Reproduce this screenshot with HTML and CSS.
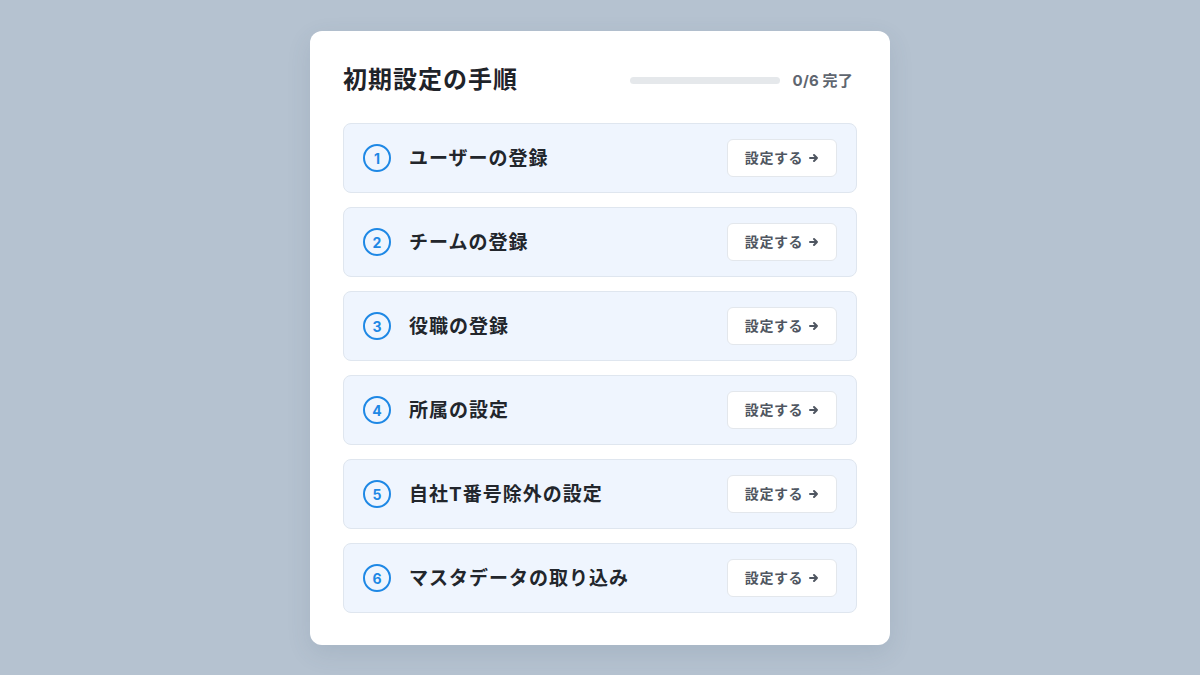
FILE: index.html
```html
<!DOCTYPE html>
<html lang="ja">
<head>
    <meta charset="UTF-8">
    <meta name="viewport" content="width=device-width, initial-scale=1.0">
    <title>初期設定の手順</title>
    <link rel="stylesheet" href="styles.css">
</head>
<body>
    <div class="setup-card">
        <div class="setup-header">
            <h1 class="setup-title">初期設定の手順</h1>
            <div class="progress">
                <div class="progress-bar"><div class="progress-fill" style="width: 0%"></div></div>
                <span class="progress-text">0/6 完了</span>
            </div>
        </div>

        <ul class="steps">
            <li class="step">
                <span class="step-num">1</span>
                <span class="step-label">ユーザーの登録</span>
                <button class="step-btn">設定する <svg class="arrow" viewBox="0 0 10 10"><path d="M1 5h7M5 2l3 3-3 3"/></svg></button>
            </li>
            <li class="step">
                <span class="step-num">2</span>
                <span class="step-label">チームの登録</span>
                <button class="step-btn">設定する <svg class="arrow" viewBox="0 0 10 10"><path d="M1 5h7M5 2l3 3-3 3"/></svg></button>
            </li>
            <li class="step">
                <span class="step-num">3</span>
                <span class="step-label">役職の登録</span>
                <button class="step-btn">設定する <svg class="arrow" viewBox="0 0 10 10"><path d="M1 5h7M5 2l3 3-3 3"/></svg></button>
            </li>
            <li class="step">
                <span class="step-num">4</span>
                <span class="step-label">所属の設定</span>
                <button class="step-btn">設定する <svg class="arrow" viewBox="0 0 10 10"><path d="M1 5h7M5 2l3 3-3 3"/></svg></button>
            </li>
            <li class="step">
                <span class="step-num">5</span>
                <span class="step-label">自社T番号除外の設定</span>
                <button class="step-btn">設定する <svg class="arrow" viewBox="0 0 10 10"><path d="M1 5h7M5 2l3 3-3 3"/></svg></button>
            </li>
            <li class="step">
                <span class="step-num">6</span>
                <span class="step-label">マスタデータの取り込み</span>
                <button class="step-btn">設定する <svg class="arrow" viewBox="0 0 10 10"><path d="M1 5h7M5 2l3 3-3 3"/></svg></button>
            </li>
        </ul>
    </div>
</body>
</html>
```

FILE: styles.css
```css
* {
    box-sizing: border-box;
}

body {
    font-family: Inter, "Noto Sans CJK JP", sans-serif;
    background: #b5c2d0;
    margin: 0;
    min-height: 100vh;
    display: flex;
    justify-content: center;
    padding-top: 31px;
}

.setup-card {
    width: 580px;
    height: 614px;
    background: #ffffff;
    border-radius: 12px;
    padding: 33px;
    box-shadow: 0 8px 24px rgba(60, 80, 110, 0.12);
}

.setup-header {
    display: flex;
    align-items: center;
    justify-content: space-between;
    height: 32px;
    margin-bottom: 27px;
}

.setup-title {
    margin: 0;
    font-size: 24px;
    line-height: 1;
    font-weight: 700;
    color: #1f2329;
    letter-spacing: 1px;
}

.progress {
    display: flex;
    align-items: center;
    gap: 13px;
    margin-right: 4px;
}

.progress-bar {
    width: 150px;
    height: 7px;
    border-radius: 4px;
    background: #e5e8eb;
    overflow: hidden;
}

.progress-fill {
    height: 100%;
    background: #1e88e5;
}

.progress-text {
    font-size: 15px;
    line-height: 1;
    font-weight: 700;
    color: #5f6670;
    letter-spacing: 0.2px;
}

.steps {
    list-style: none;
    margin: 0;
    padding: 0;
    display: flex;
    flex-direction: column;
    gap: 14px;
}

.step {
    display: flex;
    align-items: center;
    height: 70px;
    padding: 0 19px;
    background: #eff5fe;
    border: 1px solid #dfe6ef;
    border-radius: 8px;
}

.step-num {
    width: 28px;
    height: 28px;
    flex-shrink: 0;
    border: 2px solid #1e88e5;
    border-radius: 50%;
    display: flex;
    align-items: center;
    justify-content: center;
    font-size: 14px;
    font-weight: 700;
    color: #1e88e5;
}

.step-label {
    flex: 1;
    margin-left: 18px;
    font-size: 19px;
    line-height: 1;
    font-weight: 700;
    color: #22262c;
    letter-spacing: 1px;
}

.step-btn {
    width: 110px;
    height: 38px;
    padding: 0;
    background: #ffffff;
    border: 1px solid #e3e7ec;
    border-radius: 6px;
    font-family: inherit;
    font-size: 14px;
    line-height: 1;
    font-weight: 700;
    color: #4f5661;
    letter-spacing: 0.6px;
    display: flex;
    align-items: center;
    justify-content: center;
    gap: 6px;
    cursor: pointer;
}

.step-btn .arrow {
    width: 10px;
    height: 10px;
    fill: none;
    stroke: #4f5661;
    stroke-width: 2;
    stroke-linecap: round;
    stroke-linejoin: round;
}
```
